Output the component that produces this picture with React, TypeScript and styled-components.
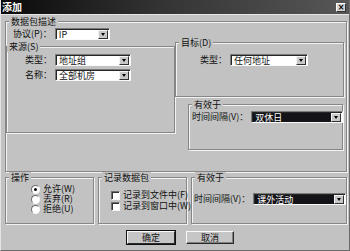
import React from 'react'
import styled, { createGlobalStyle } from 'styled-components'

const GlobalStyle = createGlobalStyle`
  html, body {
    margin: 0;
    padding: 0;
    background: #c2c2c2;
  }
  body {
    font-family: "Noto Sans CJK SC", "DejaVu Sans", sans-serif;
    font-size: 9px;
    color: #111;
  }
`

const Dialog = styled.div`
  width: 350px;
  height: 251px;
  box-sizing: border-box;
  background: #c2c2c2;
  border-left: 1px solid #e4e4e4;
  border-right: 1px solid #6a6a6a;
  border-bottom: 1px solid #6a6a6a;
  display: flex;
  flex-direction: column;
  overflow: hidden;
`

const TitleBar = styled.div`
  height: 15px;
  flex: none;
  box-sizing: border-box;
  background: linear-gradient(to right, #0a0a0a, #333 45%, #575757);
  border-bottom: 1px solid #e6e6e6;
  color: #fff;
  display: flex;
  align-items: center;
  justify-content: space-between;
  padding: 0 3px 0 1px;
  font-size: 10px;
  font-weight: bold;
  line-height: 14px;
`

const CloseButton = styled.span`
  width: 10px;
  height: 9px;
  box-sizing: border-box;
  background: #d2d2d2;
  border: 1px solid;
  border-color: #fff #333 #333 #fff;
  color: #000;
  font-family: "DejaVu Sans", sans-serif;
  font-size: 8px;
  line-height: 7px;
  text-align: center;
`

const Body = styled.div`
  flex: 1;
  padding: 1px 2px 0 4px;
  display: flex;
  flex-direction: column;
`

const Group = styled.fieldset<{ $w?: number; $h?: number }>`
  margin: 0;
  min-width: 0;
  flex: none;
  box-sizing: border-box;
  ${(p) => (p.$w ? `width: ${p.$w}px;` : '')}
  ${(p) => (p.$h ? `height: ${p.$h}px;` : '')}
  border: 1px solid #868686;
  box-shadow: 1px 1px 0 #f2f2f2, inset 1px 1px 0 #f2f2f2;
  padding: 0;
`

const Legend = styled.legend`
  margin-left: 3px;
  padding: 0 2px;
  line-height: 11px;
  font-size: 9px;
  background: #c2c2c2;
`

const OuterContent = styled.div`
  display: flex;
  align-items: flex-start;
  padding: 1px 2px 21px 0;
`

const Column = styled.div`
  width: 169px;
  display: flex;
  flex-direction: column;
`

const Row = styled.div<{ $pl: number; $pt?: number }>`
  display: flex;
  align-items: center;
  gap: 3px;
  padding-left: ${(p) => p.$pl}px;
  padding-top: ${(p) => p.$pt ?? 0}px;
  height: 12px;
  line-height: 12px;
  white-space: nowrap;
`

const Rows = styled.div<{ $pt: number; $gap: number }>`
  display: flex;
  flex-direction: column;
  gap: ${(p) => p.$gap}px;
  padding-top: ${(p) => p.$pt}px;
`

const Combo = styled.div<{ $w: number }>`
  width: ${(p) => p.$w}px;
  height: 12px;
  flex: none;
  box-sizing: border-box;
  border: 1px solid;
  border-color: #7a7a7a #fafafa #fafafa #7a7a7a;
  box-shadow: inset 1px 1px 0 #262626;
  background: #fff;
  display: flex;
  align-items: stretch;
  padding: 1px 1px 0 1px;
`

const ComboText = styled.span<{ $sel?: boolean }>`
  flex: 1;
  padding-left: 2px;
  line-height: 9px;
  font-size: 9px;
  background: ${(p) => (p.$sel ? '#141418' : 'transparent')};
  color: ${(p) => (p.$sel ? '#fff' : '#111')};
  white-space: nowrap;
`

const DropButton = styled.span`
  width: 10px;
  height: 9px;
  flex: none;
  box-sizing: border-box;
  background: #c8c8c8;
  border: 1px solid;
  border-color: #f4f4f4 #303030 #303030 #f4f4f4;
  display: flex;
  align-items: center;
  justify-content: center;
  &::after {
    content: '';
    border-left: 2.5px solid transparent;
    border-right: 2.5px solid transparent;
    border-top: 3px solid #000;
  }
`

const Label = styled.span`
  white-space: nowrap;
`

const Bottom = styled.div`
  display: flex;
  gap: 4px;
`

const OptionRow = styled.label`
  display: flex;
  align-items: center;
  gap: 3px;
  height: 10px;
  line-height: 10px;
  white-space: nowrap;
`

const Radio = styled.span<{ $on?: boolean }>`
  width: 9px;
  height: 9px;
  flex: none;
  box-sizing: border-box;
  border-radius: 50%;
  border: 1px solid;
  border-color: #6e6e6e #f6f6f6 #f6f6f6 #6e6e6e;
  background: #fff;
  display: flex;
  align-items: center;
  justify-content: center;
  &::after {
    content: '';
    width: 3px;
    height: 3px;
    border-radius: 50%;
    background: ${(p) => (p.$on ? '#000' : 'transparent')};
  }
`

const Check = styled.span`
  width: 9px;
  height: 9px;
  flex: none;
  box-sizing: border-box;
  border: 1px solid;
  border-color: #6e6e6e #f6f6f6 #f6f6f6 #6e6e6e;
  box-shadow: inset 1px 1px 0 #333;
  background: #fff;
`

const ButtonRow = styled.div`
  display: flex;
  gap: 11px;
  padding-left: 122px;
  margin-top: 7px;
`

const Button = styled.button<{ $default?: boolean }>`
  width: 48px;
  height: 13px;
  box-sizing: border-box;
  padding: 0;
  font-family: inherit;
  font-size: 9px;
  line-height: 9px;
  color: #111;
  background: #c6c6c6;
  border: 1px solid;
  border-color: #fafafa #2a2a2a #2a2a2a #fafafa;
  box-shadow: ${(p) => (p.$default ? '0 0 0 1px #111' : 'inset -1px -1px 0 #808080')};
`

const ComboBox = ({ w, value, sel }: { w: number; value: string; sel?: boolean }) => (
  <Combo $w={w}>
    <ComboText $sel={sel}>{value}</ComboText>
    <DropButton />
  </Combo>
)

export default function App() {
  return (
    <>
      <GlobalStyle />
      <Dialog>
        <TitleBar>
          <span>添加</span>
          <CloseButton>×</CloseButton>
        </TitleBar>
        <Body>
          <Group>
            <Legend>数据包描述</Legend>
            <OuterContent>
              <Column>
                <Row $pl={7}>
                  <Label>协议(P)：</Label>
                  <ComboBox w={55} value="IP" />
                </Row>
                <Group $h={92} style={{ marginTop: 1 }}>
                  <Legend style={{ marginLeft: 0 }}>来源(S)</Legend>
                  <Rows $pt={2} $gap={3}>
                    <Row $pl={18}>
                      <Label>类型：</Label>
                      <ComboBox w={76} value="地址组" />
                    </Row>
                    <Row $pl={18}>
                      <Label>名称：</Label>
                      <ComboBox w={76} value="全部机房" />
                    </Row>
                  </Rows>
                </Group>
              </Column>
              <Column>
                <Group $h={60} style={{ marginTop: 9 }}>
                  <Legend>目标(D)</Legend>
                  <Row $pl={24} $pt={6}>
                    <Label>类型：</Label>
                    <ComboBox w={78} value="任何地址" />
                  </Row>
                </Group>
                <Group $h={51} style={{ margin: '2px 1px 0 13px' }}>
                  <Legend>有效于</Legend>
                  <Row $pl={3} $pt={1}>
                    <Label>时间间隔(V)：</Label>
                    <ComboBox w={92} value="双休日" sel />
                  </Row>
                </Group>
              </Column>
            </OuterContent>
          </Group>
          <Bottom>
            <Group $w={89} $h={52}>
              <Legend>操作</Legend>
              <Rows $pt={1} $gap={0} style={{ paddingLeft: 25 }}>
                <OptionRow><Radio $on />允许(W)</OptionRow>
                <OptionRow><Radio />丢弃(R)</OptionRow>
                <OptionRow><Radio />拒绝(U)</OptionRow>
              </Rows>
            </Group>
            <Group $w={89} $h={52}>
              <Legend>记录数据包</Legend>
              <Rows $pt={7} $gap={1} style={{ paddingLeft: 12 }}>
                <OptionRow><Check />记录到文件中(F)</OptionRow>
                <OptionRow><Check />记录到窗口中(W)</OptionRow>
              </Rows>
            </Group>
            <Group $w={156} $h={52}>
              <Legend>有效于</Legend>
              <Row $pl={2} $pt={10}>
                <Label>时间间隔(V)：</Label>
                <ComboBox w={93} value="课外活动" sel />
              </Row>
            </Group>
          </Bottom>
          <ButtonRow>
            <Button $default>确定</Button>
            <Button>取消</Button>
          </ButtonRow>
        </Body>
      </Dialog>
    </>
  )
}
